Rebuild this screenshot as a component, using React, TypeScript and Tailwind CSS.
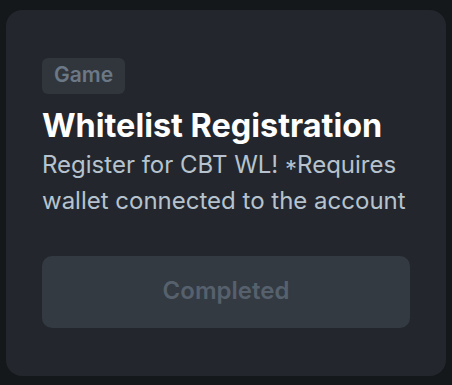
export default function App() {
  return (
    <div className="w-[452px] h-[385px] bg-[#15181b] pt-[10px] px-[6px]" style={{ fontFamily: 'Inter, "Noto Sans", sans-serif' }}>
      <div className="w-[440px] h-[366px] rounded-[16px] bg-[#23272d] px-[36px] pt-[48px] flex flex-col">
        <div className="self-start h-[36px] px-[12px] pb-[2px] rounded-[6px] bg-[#30363c] flex items-center text-[21px] font-semibold text-[#6c7885]">
          Game
        </div>
        <div className="mt-[12px] text-[32.4px] leading-[40px] font-bold text-white whitespace-nowrap">Whitelist Registration</div>
        <div className="mt-[1px] text-[24px] leading-[36px] text-[#b6c3cf]">
          Register for CBT WL! <span className="inline-block translate-y-[5px]">*</span>Requires wallet connected to the account
        </div>
        <div className="mt-[37px] h-[72px] rounded-[10px] bg-[#333a41] flex items-center justify-center text-[24px] font-semibold text-[#56616d] pb-[3px]">
          Completed
        </div>
      </div>
    </div>
  );
}
